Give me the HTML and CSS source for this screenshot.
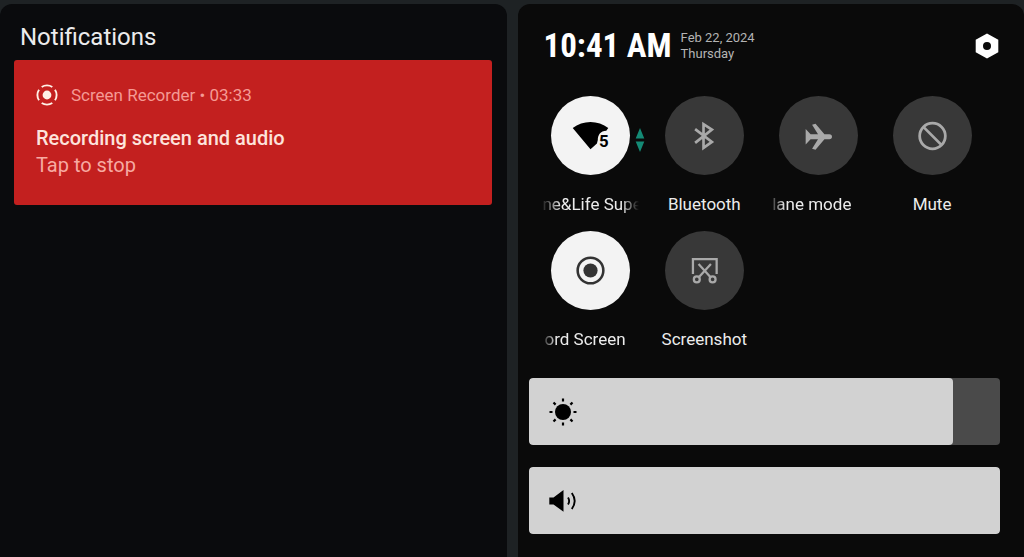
FILE: index.html
```html
<!DOCTYPE html>
<html lang="en">
<head>
<meta charset="utf-8">
<meta name="viewport" content="width=device-width, initial-scale=1">
<title>Notifications and quick settings</title>
<link rel="stylesheet" href="styles.css">
</head>
<body>
<main class="shade">
  <section class="panel notifications">
    <h1 class="panel-title">Notifications</h1>
    <button class="card" type="button">
      <span class="card-source">
        <svg class="card-icon" viewBox="0 0 22 22" aria-hidden="true">
          <circle cx="11" cy="11" r="4.4" fill="currentColor"/>
          <circle cx="11" cy="11" r="9.6" fill="none" stroke="currentColor" stroke-width="1.9" pathLength="80" stroke-dasharray="15 5" stroke-dashoffset="7.5"/>
        </svg>
        <span>Screen Recorder • 03:33</span>
      </span>
      <strong class="card-title">Recording screen and audio</strong>
      <span class="card-text">Tap to stop</span>
    </button>
  </section>

  <section class="panel controls">
    <header class="status">
      <time class="clock">10:41 AM</time>
      <p class="date">Feb 22, 2024<br>Thursday</p>
      <button class="settings" type="button" aria-label="Settings">
        <svg viewBox="0 0 24 26" aria-hidden="true">
          <path fill="currentColor" fill-rule="evenodd" d="M12 .5 23.3 6.8V19.2L12 25.5.7 19.2V6.8ZM12 9a4 4 0 1 0 0 8 4 4 0 0 0 0-8Z"/>
        </svg>
      </button>
    </header>

    <div class="tiles">
      <div class="tile">
        <button class="toggle on" type="button" aria-labelledby="t-wifi" aria-pressed="true">
          <svg viewBox="0 0 80 80" aria-hidden="true">
            <path d="M22 32.5C32 24.3 48 24.3 58 32.5L56 35.2C50 35.5 47.4 39.5 47.4 44.5L46.5 48 40 54Z" fill="#000"/>
            <text class="band" x="48.5" y="51.5">5</text>
          </svg>
        </button>
        <svg class="traffic" viewBox="0 0 10 26" aria-hidden="true"><path d="M5 1 9.3 11.5H.7ZM5 25 9.3 14.5H.7Z" fill="#148a75"/></svg>
        <span class="label fade-both" id="t-wifi">ne&amp;Life Supe</span>
      </div>
      <div class="tile">
        <button class="toggle" type="button" aria-labelledby="t-bt" aria-pressed="false">
          <svg viewBox="0 0 80 80" aria-hidden="true"><path d="M30.5 33.5 47.500 46.500 39 52.500V28.500L47.500 34 30.500 47.500" fill="none" stroke="currentColor" stroke-width="2.700"/></svg>
        </button>
        <span class="label" id="t-bt">Bluetooth</span>
      </div>
      <div class="tile">
        <button class="toggle" type="button" aria-labelledby="t-plane" aria-pressed="false">
          <svg viewBox="0 0 80 80" aria-hidden="true"><path d="M27 33.500 32 38.800H39.500L33.500 29 37 28 46 38.800H51C54.600 38.800 54.600 43.800 51 43.800H46L37 54.500 33.500 53.500 39.500 43.800H32L27 49Z" fill="currentColor"/></svg>
        </button>
        <span class="label fade-start" id="t-plane">lane mode</span>
      </div>
      <div class="tile">
        <button class="toggle" type="button" aria-labelledby="t-mute" aria-pressed="false">
          <svg viewBox="0 0 80 80" aria-hidden="true"><g fill="none" stroke="currentColor" stroke-width="2.8"><circle cx="40" cy="40.5" r="13"/><path d="M31 31.5 49 49.5"/></g></svg>
        </button>
        <span class="label" id="t-mute">Mute</span>
      </div>
      <div class="tile">
        <button class="toggle on" type="button" aria-labelledby="t-record" aria-pressed="true">
          <svg viewBox="0 0 80 80" aria-hidden="true"><circle cx="40" cy="40" r="13" fill="none" stroke="#333" stroke-width="2.6"/><circle cx="40" cy="40" r="7.2" fill="#333"/></svg>
        </button>
        <span class="label fade-start" id="t-record">ord Screen</span>
      </div>
      <div class="tile">
        <button class="toggle" type="button" aria-labelledby="t-shot" aria-pressed="false">
          <svg viewBox="0 0 80 80" aria-hidden="true"><g fill="none" stroke="currentColor" stroke-width="2.3"><path d="M28.3 43.5V28.5H52.3V43.5M34 33.5 45.7 46.3M46.5 33.5 34.7 46.3"/><circle cx="32.2" cy="49" r="3"/><circle cx="48.2" cy="49" r="3"/></g></svg>
        </button>
        <span class="label" id="t-shot">Screenshot</span>
      </div>
    </div>

    <div class="sliders">
      <div class="slider">
        <span class="fill" style="width: 90%"></span>
        <svg class="slider-icon" viewBox="0 0 28 28" aria-hidden="true">
          <circle cx="14" cy="14" r="8" fill="#000"/>
          <g stroke="#000" stroke-width="2.2"><path d="M14 .5V3.5M14 24.5V27.5M.5 14H3.5M24.5 14H27.5M4.5 4.500 6.600 6.600M21.400 21.400 23.500 23.500M4.500 23.500 6.600 21.400M21.400 6.600 23.500 4.500"/></g>
        </svg>
        <input type="range" min="0" max="100" value="90" aria-label="Brightness">
      </div>
      <div class="slider">
        <span class="fill" style="width: 100%"></span>
        <svg class="slider-icon" viewBox="0 0 28 28" aria-hidden="true">
          <path d="M.3 10.5H4.5L14.5 3V24.7L4.5 17.5H.3Z" fill="#000"/>
          <path d="M19 10.5Q21.3 14 19 17.5M22.8 6Q28.6 14 22.8 22" fill="none" stroke="#000" stroke-width="1.9"/>
        </svg>
        <input type="range" min="0" max="100" value="100" aria-label="Volume">
      </div>
    </div>
  </section>
</main>
</body>
</html>
```

FILE: styles.css
```css
* {
  box-sizing: border-box;
}

body {
  margin: 0;
  background: #1e2224;
  color: #ececec;
  font-family: Roboto, "Liberation Sans", sans-serif;
}

button {
  border: 0;
  padding: 0;
  background: none;
  color: inherit;
  font: inherit;
  cursor: pointer;
}

.shade {
  display: grid;
  grid-template-columns: 1fr 1fr;
  gap: 11px;
  min-height: 100vh;
  padding-top: 4px;
}

.panel {
  min-width: 0;
  border-radius: 12px 12px 0 0;
  background: #0a0a0a;
}

.notifications {
  padding: 18px 15px 16px 14px;
  background: #0a0b0d;
}

.panel-title {
  margin: 0 0 8px;
  padding-left: 6px;
  font-size: 24px;
  font-weight: 400;
  line-height: 30px;
}

.card {
  display: flex;
  flex-direction: column;
  align-items: flex-start;
  width: 100%;
  padding: 22px 22px 26px;
  border-radius: 3px;
  background: #c3201f;
  color: #fde3dc;
  text-align: left;
}

.card-source {
  display: flex;
  align-items: center;
  gap: 13px;
  margin-bottom: 17px;
  color: #f59a94;
  font-size: 17px;
  line-height: 26px;
}

.card-icon {
  width: 22px;
  height: 22px;
  color: #fff0e6;
}

.card-title {
  font-size: 20px;
  font-weight: 500;
  line-height: 27px;
}

.card-text {
  color: #f7aaa2;
  font-size: 20px;
  line-height: 27px;
}

.controls {
  padding: 24px 24px 23px 11px;
}

.status {
  display: flex;
  align-items: center;
  gap: 9px;
  padding: 0 1px 0 15px;
}

.clock {
  color: #fff;
  font-family: "Roboto Condensed", "Liberation Sans Narrow", Roboto, sans-serif;
  font-size: 33px;
  font-weight: 700;
  line-height: 36px;
  white-space: nowrap;
}

.date {
  margin: 0;
  color: #b4b4b4;
  font-size: 13px;
  line-height: 16px;
}

.settings {
  width: 24px;
  height: 26px;
  margin-left: auto;
  color: #fff;
}

.settings svg {
  display: block;
}

.tiles {
  display: grid;
  grid-template-columns: repeat(4, 1fr);
  row-gap: 15px;
  margin: 32px 11px 27px 5px;
}

.tile {
  position: relative;
  display: flex;
  flex-direction: column;
  align-items: center;
  gap: 17px;
}

.toggle {
  width: 79px;
  height: 79px;
  border-radius: 50%;
  background: #383838;
  color: #a9a9a9;
}

.toggle svg {
  display: block;
}

.toggle.on {
  background: #f3f3f3;
}

.band {
  fill: #000;
  font-size: 17px;
  font-weight: 700;
}

.traffic {
  position: absolute;
  top: 31px;
  right: 2px;
  width: 10px;
  height: 26px;
}

.label {
  width: 98px;
  overflow: hidden;
  padding: 0 1px;
  font-size: 17px;
  line-height: 24px;
  text-align: center;
  white-space: nowrap;
}

.fade-start {
  padding-left: 3px;
  text-align: left;
  -webkit-mask-image: linear-gradient(to right, transparent, #000 16px);
  mask-image: linear-gradient(to right, transparent, #000 16px);
}

.fade-both {
  text-align: left;
  -webkit-mask-image: linear-gradient(to right, transparent, #000 20px, #000 80px, transparent);
  mask-image: linear-gradient(to right, transparent, #000 20px, #000 80px, transparent);
}

.sliders {
  display: grid;
  gap: 22px;
}

.slider {
  display: grid;
  align-items: center;
  height: 67px;
  overflow: hidden;
  border-radius: 4px;
  background: #4a4a4a;
}

.slider > * {
  grid-area: 1 / 1;
}

.fill {
  height: 100%;
  border-radius: 4px;
  background: #d2d2d2;
}

.slider-icon {
  width: 28px;
  height: 28px;
  margin-left: 20px;
}

.slider input {
  width: 100%;
  height: 100%;
  margin: 0;
  background: transparent;
  appearance: none;
  cursor: pointer;
}

.slider input::-webkit-slider-thumb {
  width: 8px;
  height: 67px;
  background: transparent;
  appearance: none;
}
```
